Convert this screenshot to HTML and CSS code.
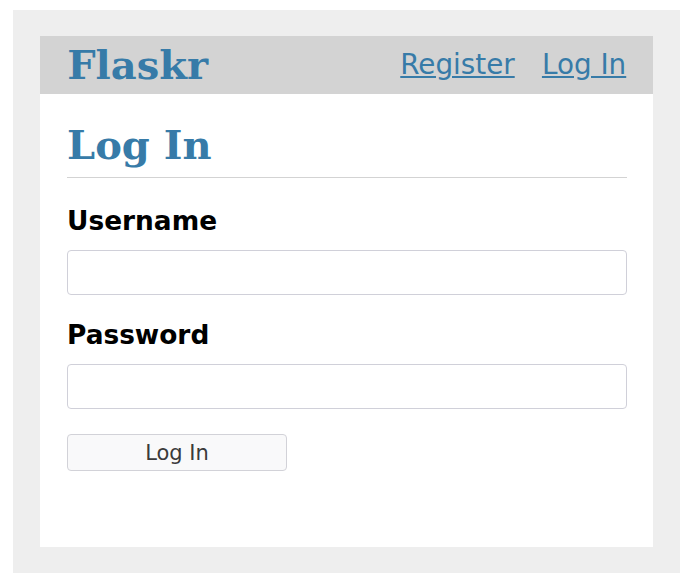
FILE: index.html
```html
<!DOCTYPE html>
<html lang="en">
<head>
<meta charset="utf-8">
<title>Log In - Flaskr</title>
<link rel="stylesheet" href="styles.css">
</head>
<body>
<div class="page">
  <div class="card">
    <nav class="nav">
      <h1 class="brand"><a href="#">Flaskr</a></h1>
      <ul class="links">
        <li><a href="#">Register</a></li>
        <li><a href="#">Log In</a></li>
      </ul>
    </nav>
    <section class="content">
      <header class="content-header">
        <h1 class="title">Log In</h1>
      </header>
      <form class="form">
        <label class="label" for="username">Username</label>
        <input class="field" name="username" id="username">
        <label class="label" for="password">Password</label>
        <input class="field" type="password" name="password" id="password">
        <button class="submit" type="button">Log In</button>
      </form>
    </section>
  </div>
</div>
</body>
</html>
```

FILE: styles.css
```css
html, body {
  margin: 0;
  height: 100%;
}
body {
  background: #ffffff;
  padding: 10px 12px 12px 13px;
  box-sizing: border-box;
  font-family: "DejaVu Sans", sans-serif;
  font-size: 26.4px;
  color: #000;
}
.page {
  background: #eeeeee;
  padding: 26px 27px;
  height: 100%;
  box-sizing: border-box;
  display: flex;
  flex-direction: column;
}
.card {
  background: #ffffff;
  flex: 1;
}
a {
  color: #377ba8;
}
.nav {
  background: #d3d3d3;
  display: flex;
  align-items: center;
  padding: 0 13.2px;
}
.brand {
  flex: auto;
  margin: 0;
  font-family: "DejaVu Serif", serif;
  font-size: 40px;
  line-height: 48px;
  color: #377ba8;
}
.brand a {
  text-decoration: none;
  padding: 6.6px 14px;
}
.links {
  display: flex;
  list-style: none;
  margin: 0;
  padding: 0;
}
.links a {
  display: block;
  padding: 13.3px 13.6px;
  font-size: 27.8px;
  line-height: 31px;
}
.content {
  padding: 0 26.5px 26.4px 27px;
}
.content-header {
  border-bottom: 1px solid #d3d3d3;
  display: flex;
  align-items: flex-end;
}
.title {
  flex: auto;
  margin: 26.4px 0 6.6px 0;
  font-family: "DejaVu Serif", serif;
  font-size: 40px;
  line-height: 50px;
  color: #377ba8;
}
.form {
  margin: 27.4px 0 26.4px;
  display: flex;
  flex-direction: column;
}
.label {
  font-weight: bold;
  line-height: 31px;
  margin-bottom: 14.2px;
}
.field {
  height: 45px;
  box-sizing: border-box;
  margin: 0 0 24px 0;
  border: 1px solid #d0d0d9;
  border-radius: 4px;
  background: #fff;
  font-family: "DejaVu Sans", sans-serif;
  font-size: 22px;
  padding: 2px 6px;
}
.submit {
  align-self: start;
  margin-top: 1px;
  width: 220px;
  height: 37px;
  box-sizing: border-box;
  border: 1px solid #d2d2d8;
  border-radius: 4px;
  background: #f9f9fa;
  color: #3a3a3a;
  font-family: "DejaVu Sans", sans-serif;
  font-size: 21px;
  padding: 0;
}
```
